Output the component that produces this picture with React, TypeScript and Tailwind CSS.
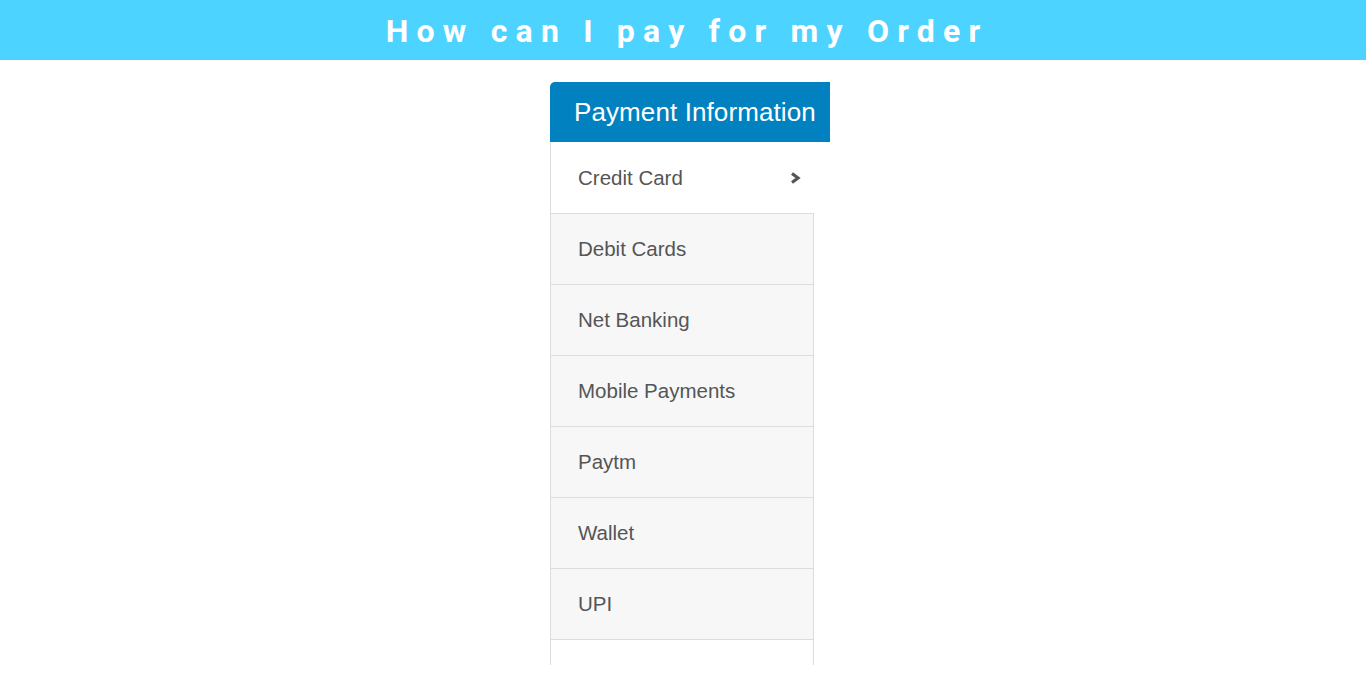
import React from "react";

const items = ["Debit Cards", "Net Banking", "Mobile Payments", "Paytm", "Wallet", "UPI"];

export default function App() {
  return (
    <div className="min-h-[685px] bg-white">
      <div className="h-[60px] bg-[#4dd3ff] flex items-center justify-center pt-[2px]">
        <h1 className="text-white font-bold text-[32px] tracking-[0.256em] pl-[0.256em] font-['Roboto',sans-serif] leading-none">
          How can I pay for my Order
        </h1>
      </div>
      <div className="ml-[550px] mt-[22px] w-[280px] font-['Liberation_Sans',Arial,sans-serif]">
        <div className="h-[60px] bg-[#0181bf] rounded-tl-[5px] flex items-center pl-[24px] text-white text-[26px] tracking-[0.1px]">
          Payment Information
        </div>
        <div className="h-[71px] bg-white border-l border-[#dddddd] flex items-center justify-between pl-[27px] pr-[29px] text-[#555555] text-[20.5px]">
          <span className="mt-[1px]">Credit Card</span>
          <svg width="11" height="12" viewBox="0 0 11 12" className="mt-[1px]">
            <path d="M2 1.5 L8 6 L2 10.5" stroke="#555" strokeWidth="3.2" fill="none" strokeLinejoin="miter" />
          </svg>
        </div>
        <div className="w-[264px]">
          {items.map((t, i) => (
            <div
              key={t}
              className={`h-[71px] bg-[#f7f7f7] border-t border-l border-r border-[#dddddd] flex items-center pl-[27px] text-[#555555] text-[20.5px] ${i === items.length - 1 ? "border-b h-[72px]" : ""}`}
            >
              <span className="mt-[1px]">{t}</span>
            </div>
          ))}
          <div className="h-[25px] bg-white border-l border-r border-[#dddddd]" />
        </div>
      </div>
    </div>
  );
}
